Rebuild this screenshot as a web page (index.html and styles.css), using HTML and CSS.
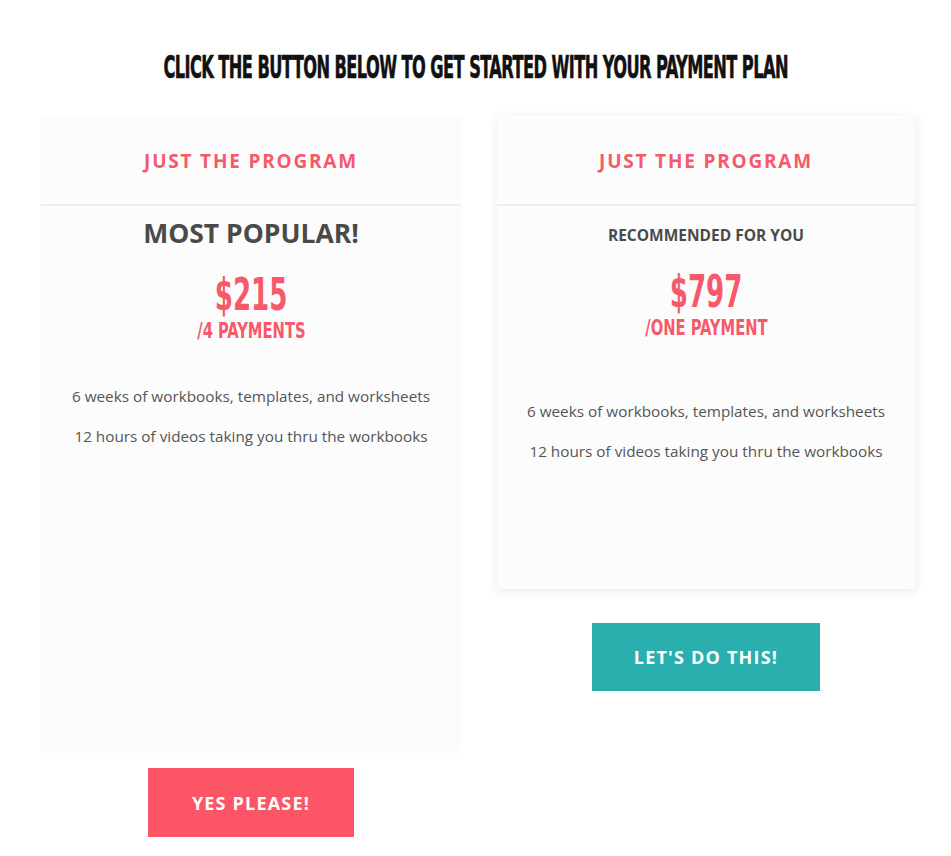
FILE: index.html
```html
<!DOCTYPE html>
<html lang="en">
<head>
<meta charset="utf-8">
<title>Payment plan</title>
<link rel="stylesheet" href="styles.css">
</head>
<body>
<main class="page">
  <h1 class="page-title"><span class="squeeze squeeze--title">Click the button below to get started with your payment plan</span></h1>
  <div class="plans">
    <section class="plan">
      <div class="card card--tall">
        <header class="card-head">Just the program</header>
        <div class="card-body">
          <p class="tag tag--big">Most popular!</p>
          <div class="price">
            <span class="price-amount squeeze">$215</span>
            <span class="price-term squeeze">/4 payments</span>
          </div>
          <ul class="features">
            <li>6 weeks of workbooks, templates, and worksheets</li>
            <li>12 hours of videos taking you thru the workbooks</li>
          </ul>
        </div>
      </div>
      <a class="btn btn--red" href="#">Yes please!</a>
    </section>
    <section class="plan">
      <div class="card card--short card--raised">
        <header class="card-head">Just the program</header>
        <div class="card-body">
          <p class="tag tag--small">Recommended for you</p>
          <div class="price">
            <span class="price-amount squeeze">$797</span>
            <span class="price-term squeeze">/one payment</span>
          </div>
          <ul class="features features--low">
            <li>6 weeks of workbooks, templates, and worksheets</li>
            <li>12 hours of videos taking you thru the workbooks</li>
          </ul>
        </div>
      </div>
      <a class="btn btn--teal" href="#">Let's do this!</a>
    </section>
  </div>
</main>
</body>
</html>
```

FILE: styles.css
```css
* { box-sizing: border-box; }
html, body { margin: 0; padding: 0; background: #ffffff; }
body { font-family: "Open Sans", "Liberation Sans", sans-serif; color: #4a4a4a; }

.page { width: 951px; padding-top: 47px; overflow: hidden; }

.squeeze {
  display: inline-block;
  font-family: "Liberation Sans Narrow", "DejaVu Sans Condensed", "Liberation Sans", sans-serif;
  font-weight: 700;
  text-transform: uppercase;
  transform-origin: center;
  white-space: nowrap;
}

.page-title {
  margin: 0;
  display: flex;
  justify-content: center;
  font-size: 32px;
  line-height: 40px;
  color: #111111;
}
.squeeze--title {
  letter-spacing: -1px;
  transform: scaleX(0.563);
  -webkit-text-stroke: 0.6px #111111;
}

.plans {
  display: grid;
  grid-template-columns: 420px 418px;
  column-gap: 36px;
  padding-left: 41px;
  margin-top: 29px;
  align-items: start;
}

.plan { display: flex; flex-direction: column; align-items: center; }

.card {
  width: 100%;
  background: #fcfcfc;
  display: flex;
  flex-direction: column;
}
.card--tall { min-height: 636px; box-shadow: 0 0 3px rgba(0,0,0,0.03); }
.card--short { min-height: 473px; }
.card--raised { border-radius: 4px; box-shadow: 0 2px 12px rgba(0,0,0,0.09); }

.card-head {
  height: 90px;
  border-bottom: 2px solid #eeeeee;
  display: flex;
  align-items: center;
  justify-content: center;
  font-family: "Open Sans", "Liberation Sans", sans-serif;
  font-weight: 700;
  font-size: 19px;
  letter-spacing: 1.8px;
  text-transform: uppercase;
  color: #f65a6a;
  padding-top: 2px;
}

.card-body { text-align: center; padding-top: 9px; }

.tag { margin: 0; font-weight: 700; text-transform: uppercase; color: #4a4a4a; }
.tag--big { font-size: 26.5px; line-height: 36px; }
.tag--small { font-size: 15.5px; line-height: 20px; margin-top: 10px; }

.price { display: flex; flex-direction: column; align-items: center; color: #f65a6a; margin-top: 22px; }
.tag--small + .price { margin-top: 25px; }
.price-amount { font-size: 44px; line-height: 44px; transform: scaleX(0.66); }
.price-term { font-size: 21px; line-height: 22px; margin-top: 3px; transform: scaleX(0.78); }

.features { list-style: none; margin: 44px 0 0; padding: 0; font-size: 15.3px; color: #555555; }
.features li { line-height: 20px; margin-bottom: 20px; }
.features--low { margin-top: 62px; }

.btn {
  display: flex;
  align-items: center;
  justify-content: center;
  color: #ffffff;
  text-decoration: none;
  text-transform: uppercase;
  font-weight: 700;
  font-size: 18px;
  letter-spacing: 1.2px;
}
.btn--red { width: 206px; height: 69px; background: #fc5566; margin-top: 16px; }
.btn--teal { width: 228px; height: 68px; background: #2aaeae; margin-top: 34px; }
```
